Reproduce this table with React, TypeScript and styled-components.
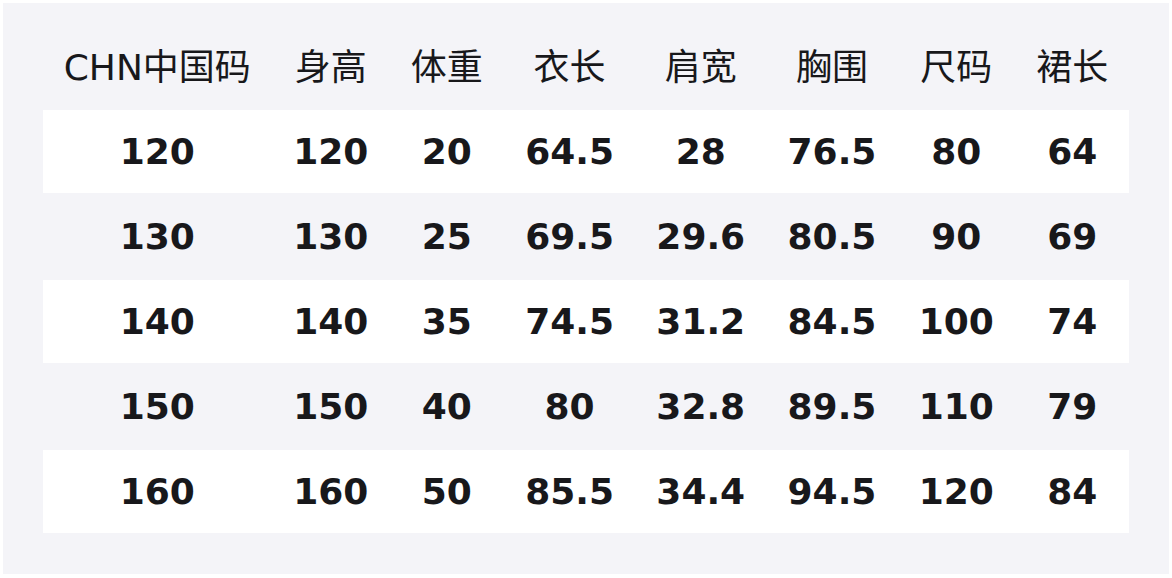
import React from "react";
import styled, { createGlobalStyle } from "styled-components";

const Global = createGlobalStyle`
  html, body {
    margin: 0;
    padding: 0;
    background: #ffffff;
  }
  body {
    font-family: "DejaVu Sans", "Noto Sans CJK SC", sans-serif;
    color: #18181b;
  }
`;

const Panel = styled.div`
  box-sizing: border-box;
  margin: 3px;
  width: 1166px;
  height: 571px;
  padding-top: 20px;
  background: #f4f4f8;
  display: flex;
  justify-content: center;
  align-items: flex-start;
`;

const Table = styled.table`
  border-collapse: separate;
  border-spacing: 0 2px;
`;

const HeadCell = styled.th`
  height: 77px;
  padding: 0 21.2px 6px;
  font-size: 36px;
  font-weight: 400;
  text-align: center;
  vertical-align: middle;
  white-space: nowrap;
`;

const Row = styled.tr<{ $striped: boolean }>`
  background: ${(p) => (p.$striped ? "#ffffff" : "#f4f4f8")};
`;

const Cell = styled.td`
  height: 83px;
  padding: 0 21.2px;
  font-size: 36px;
  font-weight: 700;
  text-align: center;
  vertical-align: middle;
  white-space: nowrap;
`;

const headers = ["CHN中国码", "身高", "体重", "衣长", "肩宽", "胸围", "尺码", "裙长"];

const rows = [
  ["120", "120", "20", "64.5", "28", "76.5", "80", "64"],
  ["130", "130", "25", "69.5", "29.6", "80.5", "90", "69"],
  ["140", "140", "35", "74.5", "31.2", "84.5", "100", "74"],
  ["150", "150", "40", "80", "32.8", "89.5", "110", "79"],
  ["160", "160", "50", "85.5", "34.4", "94.5", "120", "84"],
];

export default function App() {
  return (
    <>
      <Global />
      <Panel>
        <Table>
          <thead>
            <tr>
              {headers.map((h) => (
                <HeadCell key={h}>{h}</HeadCell>
              ))}
            </tr>
          </thead>
          <tbody>
            {rows.map((r, i) => (
              <Row key={i} $striped={i % 2 === 0}>
                {r.map((v, j) => (
                  <Cell key={j}>{v}</Cell>
                ))}
              </Row>
            ))}
          </tbody>
        </Table>
      </Panel>
    </>
  );
}
